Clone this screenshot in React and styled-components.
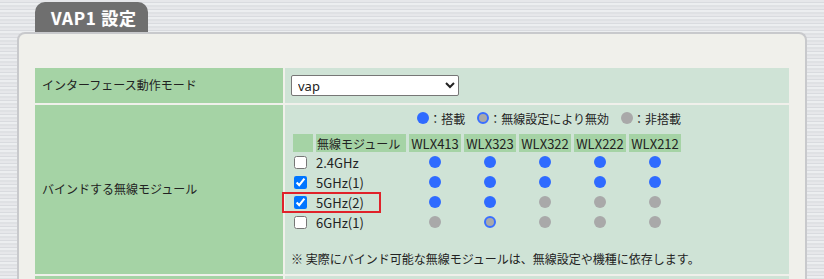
import React from "react";
import styled, { createGlobalStyle } from "styled-components";

const GlobalStyle = createGlobalStyle`
  body {
    margin: 0;
    font-family: "Noto Sans CJK JP", "Noto Sans", sans-serif;
    font-size: 12px;
    color: #222;
    background: repeating-linear-gradient(
      180deg,
      #e6e7ea 0px,
      #e6e7ea 2px,
      #d9dbdf 2px,
      #d9dbdf 3px,
      #eceef0 3px,
      #eceef0 5px,
      #dfe1e4 5px,
      #dfe1e4 7px
    );
  }
`;

const Page = styled.div`
  padding-top: 2px;
`;

const Tab = styled.div`
  display: inline-flex;
  align-items: center;
  margin-left: 35px;
  width: 113px;
  height: 30px;
  box-sizing: border-box;
  padding-left: 16px;
  background: #6f6f6f;
  border-radius: 10px 10px 0 0;
  color: #fff;
  font-family: "Noto Sans CJK JP", "Noto Sans", sans-serif;
  font-weight: 700;
  font-size: 17px;
  letter-spacing: 0.8px;
  text-shadow: 0 0 1px #aaa;
`;

const Panel = styled.div`
  margin: 0 17px;
  background: #f0f0eb;
  border: 2px solid #c8c9cc;
  border-bottom: none;
  border-radius: 8px 8px 0 0;
  padding: 34px 16px 0 16px;
`;

const Table = styled.div`
  display: grid;
  grid-template-columns: 248px 1fr;
  gap: 2px;
`;

const Label = styled.div`
  background: #a5d3a5;
  display: flex;
  align-items: center;
  padding-left: 7px;
  padding-bottom: 2px;
  font-size: 12px;
  min-height: ${(p) => p.$min || "0"};
`;

const Value = styled.div`
  background: #cfe3d6;
  padding: ${(p) => p.$pad || "7px 6px"};
  min-height: ${(p) => p.$min || "0"};
`;

const Select = styled.select`
  width: 168px;
  height: 21px;
  font-family: "Noto Sans", sans-serif;
  font-size: 13px;
  border: 1px solid #767676;
  border-radius: 2px;
  background: #fff;
  color: #222;
  padding: 0 2px;
`;

const ModuleBlock = styled.div`
  display: inline-block;
  margin-left: 2px;
`;

const Legend = styled.div`
  display: flex;
  justify-content: flex-end;
  align-items: center;
  height: 18px;
  margin-bottom: 7px;
`;

const LegendItem = styled.span`
  display: inline-flex;
  align-items: center;
  margin-left: ${(p) => (p.$first ? "0" : "12px")};
`;

const Dot = styled.span`
  display: inline-block;
  width: ${(p) => (p.$kind === "off" ? "8px" : "12px")};
  height: ${(p) => (p.$kind === "off" ? "8px" : "12px")};
  border-radius: 50%;
  box-sizing: content-box;
  background: ${(p) => (p.$kind === "on" ? "#2f6bff" : "#a9a9a9")};
  border: ${(p) => (p.$kind === "off" ? "2px solid #3a6fff" : "none")};
`;

const Grid = styled.div`
  display: grid;
  grid-template-columns: 20px 90px repeat(5, 52px);
  column-gap: 3px;
  grid-auto-rows: 20px;
  grid-template-rows: 18px;
`;

const Head = styled.div`
  background: #a5d3a5;
  display: flex;
  align-items: center;
  justify-content: ${(p) => (p.$left ? "flex-start" : "center")};
  padding-left: ${(p) => (p.$left ? "1px" : "0")};
  font-size: ${(p) => (p.$latin ? "13px" : "12px")};
  white-space: nowrap;
`;

const Cell = styled.div`
  display: flex;
  align-items: center;
  justify-content: ${(p) => (p.$left ? "flex-start" : "center")};
  position: relative;
  font-size: 13px;
  white-space: nowrap;
`;

const Check = styled.input`
  width: 13px;
  height: 13px;
  margin: 0 0 0 1px;
`;

const Highlight = styled.span`
  position: absolute;
  left: -11px;
  top: 0px;
  width: 99px;
  height: 21px;
  box-sizing: border-box;
  border: 2px solid #e0222a;
  pointer-events: none;
`;

const Note = styled.div`
  margin-top: 18px;
  line-height: 18px;
  font-size: 12px;
`;

const models = ["WLX413", "WLX323", "WLX322", "WLX222", "WLX212"];

const modules = [
  { name: "2.4GHz", checked: false, dots: ["on", "on", "on", "on", "on"] },
  { name: "5GHz(1)", checked: true, dots: ["on", "on", "on", "on", "on"] },
  {
    name: "5GHz(2)",
    checked: true,
    mark: true,
    dots: ["on", "on", "na", "na", "na"],
  },
  { name: "6GHz(1)", checked: false, dots: ["na", "off", "na", "na", "na"] },
];

export default function App() {
  return (
    <Page>
      <GlobalStyle />
      <Tab>VAP1 設定</Tab>
      <Panel>
        <Table>
          <Label>インターフェース動作モード</Label>
          <Value>
            <Select defaultValue="vap">
              <option value="vap">vap</option>
            </Select>
          </Value>

          <Label>バインドする無線モジュール</Label>
          <Value $pad="4px 6px 6px 6px">
            <ModuleBlock>
              <Legend>
                <LegendItem $first>
                  <Dot $kind="on" />
                  ：搭載
                </LegendItem>
                <LegendItem>
                  <Dot $kind="off" />
                  ：無線設定により無効
                </LegendItem>
                <LegendItem>
                  <Dot $kind="na" />
                  ：非搭載
                </LegendItem>
              </Legend>
              <Grid>
                <Head />
                <Head $left>無線モジュール</Head>
                {models.map((m) => (
                  <Head key={m} $latin>
                    {m}
                  </Head>
                ))}
                {modules.map((mod) => (
                  <React.Fragment key={mod.name}>
                    <Cell $left>
                      <Check type="checkbox" defaultChecked={mod.checked} />
                      {mod.mark && <Highlight />}
                    </Cell>
                    <Cell $left>{mod.name}</Cell>
                    {mod.dots.map((d, i) => (
                      <Cell key={i}>
                        <Dot $kind={d} />
                      </Cell>
                    ))}
                  </React.Fragment>
                ))}
              </Grid>
            </ModuleBlock>
            <Note>※ 実際にバインド可能な無線モジュールは、無線設定や機種に依存します。</Note>
          </Value>

          <Label $min="33px" />
          <Value $min="33px" />
        </Table>
      </Panel>
    </Page>
  );
}
